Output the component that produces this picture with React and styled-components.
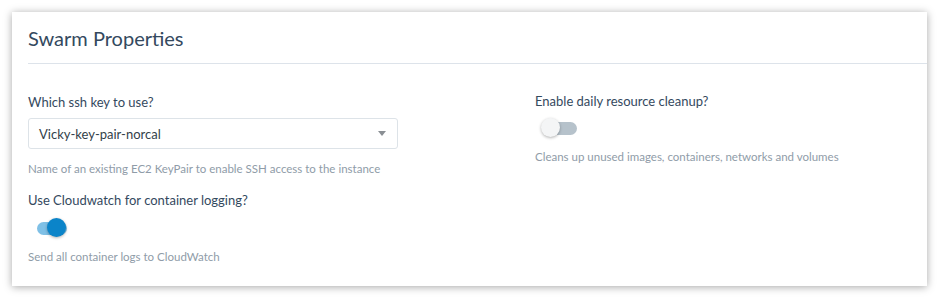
import React, { useState } from 'react';
import styled, { createGlobalStyle } from 'styled-components';

const GlobalStyle = createGlobalStyle`
    body {
        margin: 0;
        background: #ffffff;
        font-family: Lato, "Open Sans", sans-serif;
    }
`;

const Page = styled.div`
    padding: 12px;
    width: 939px;
    box-sizing: border-box;
`;

const Card = styled.div`
    width: 915px;
    height: 274px;
    background: #fff;
    box-shadow: 0 1px 8px rgba(0, 0, 0, 0.35);
    box-sizing: border-box;
`;

const Header = styled.div`
    margin-left: 16px;
    height: 52px;
    border-bottom: 1px solid #dde3ea;
    display: flex;
    align-items: center;
    padding-top: 1px;
    box-sizing: border-box;
`;

const Title = styled.h2`
    margin: 0;
    font-size: 20px;
    font-weight: 400;
    color: #34495e;
`;

const Body = styled.div`
    display: grid;
    grid-template-columns: 507px 1fr;
    padding: 29px 16px 0 16px;
`;

const Column = styled.div`
    display: flex;
    flex-direction: column;
    margin-top: ${({ $mt }) => $mt || 0}px;
`;

const Field = styled.div`
    display: flex;
    flex-direction: column;
    margin-bottom: ${({ $gap }) => $gap || 0}px;
`;

const Label = styled.div`
    font-size: 13px;
    color: #34495e;
    line-height: 18px;
    margin-bottom: ${({ $mb }) => $mb}px;
`;

const Help = styled.div`
    font-size: 11.5px;
    color: #8f9ca8;
    line-height: 16px;
    margin-top: ${({ $mt }) => $mt}px;
`;

const SelectBox = styled.div`
    width: 370px;
    height: 31px;
    border: 1px solid #dde3e8;
    border-radius: 3px;
    box-sizing: border-box;
    display: flex;
    align-items: center;
    justify-content: space-between;
    padding: 0 11px 0 10px;
    font-size: 13px;
    color: #333f4a;
`;

const Caret = styled.span`
    width: 0;
    height: 0;
    border-left: 4.5px solid transparent;
    border-right: 4.5px solid transparent;
    border-top: 5px solid #8a8f94;
`;

const SwitchWrap = styled.button`
    width: 38px;
    height: 20px;
    padding: 0;
    margin-left: ${({ $ml }) => $ml}px;
    border: none;
    background: transparent;
    display: flex;
    align-items: center;
    cursor: pointer;
    position: relative;
`;

const Track = styled.span`
    width: 30px;
    height: 13px;
    border-radius: 7px;
    margin-left: 4px;
    background: ${({ $on }) => ($on ? '#7fc0e6' : '#b6c2cb')};
`;

const Knob = styled.span`
    position: absolute;
    top: 0;
    left: ${({ $on }) => ($on ? '14px' : '-2px')};
    width: 19px;
    height: 19px;
    border-radius: 50%;
    background: ${({ $on }) => ($on ? '#0b84c9' : '#f4f5f6')};
    box-shadow: 0 1px 3px rgba(0, 0, 0, 0.3);
`;

const Switch = ({ on, onClick, ml }) => (
    <SwitchWrap $ml={ml} onClick={onClick}>
        <Track $on={on} />
        <Knob $on={on} />
    </SwitchWrap>
);

const App = () => {
    const [cloudwatch, setCloudwatch] = useState(true);
    const [cleanup, setCleanup] = useState(false);

    return (
        <Page>
            <GlobalStyle />
            <Card>
                <Header>
                    <Title>Swarm Properties</Title>
                </Header>
                <Body>
                    <Column>
                        <Field $gap={14}>
                            <Label $mb={7}>Which ssh key to use?</Label>
                            <SelectBox>
                                Vicky-key-pair-norcal
                                <Caret />
                            </SelectBox>
                            <Help $mt={12}>Name of an existing EC2 KeyPair to enable SSH access to the instance</Help>
                        </Field>
                        <Field>
                            <Label $mb={9}>Use Cloudwatch for container logging?</Label>
                            <Switch ml={5} on={cloudwatch} onClick={() => setCloudwatch(!cloudwatch)} />
                            <Help $mt={11}>Send all container logs to CloudWatch</Help>
                        </Field>
                    </Column>
                    <Column $mt={-1}>
                        <Field>
                            <Label $mb={8}>Enable daily resource cleanup?</Label>
                            <Switch ml={8} on={cleanup} onClick={() => setCleanup(!cleanup)} />
                            <Help $mt={11}>Cleans up unused images, containers, networks and volumes</Help>
                        </Field>
                    </Column>
                </Body>
            </Card>
        </Page>
    );
};

export default App;
